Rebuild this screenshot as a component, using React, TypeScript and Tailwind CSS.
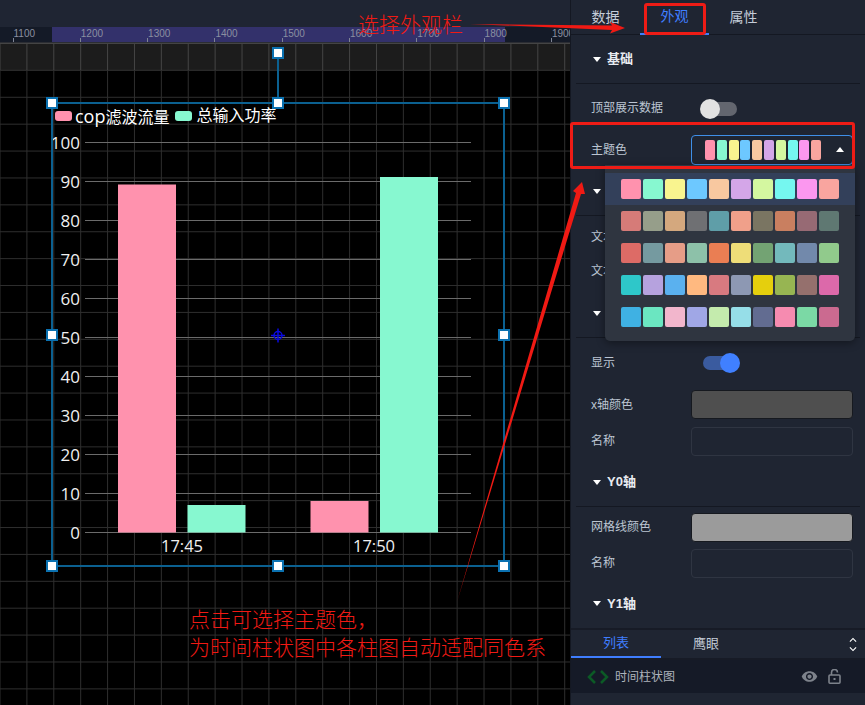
import React from "react";
import { MdVisibility, MdKeyboardArrowUp, MdKeyboardArrowDown } from "react-icons/md";

const palettes = [
  ["#ff92ae", "#87f8d0", "#f9f48f", "#6dc8ff", "#f8c8a0", "#d4a6e8", "#d4f7a0", "#75f7f0", "#fb97ef", "#f9a59f"],
  ["#d67b78", "#969e8a", "#d4a87e", "#6f7073", "#5f9ea8", "#f0a08a", "#7a7562", "#c97f60", "#976a74", "#5f7872"],
  ["#dd6b66", "#759aa0", "#e69d87", "#8dc1a9", "#ea7e53", "#eedd78", "#73a373", "#73b9bc", "#7289ab", "#91ca8c"],
  ["#2ec7c9", "#b6a2de", "#5ab1ef", "#ffb980", "#d87a80", "#8d98b3", "#e5cf0d", "#97b552", "#95706d", "#dc69aa"],
  ["#3fb1e3", "#6be6c1", "#f2b6cc", "#a0a7e6", "#c4ebad", "#96dee8", "#626c91", "#f68bb0", "#7bd9a5", "#cb6a90"],
];

const rulerLabels = ["1100", "1200", "1300", "1400", "1500", "1600", "1700", "1800", "1900"];
const yLabels = [100, 90, 80, 70, 60, 50, 40, 30, 20, 10, 0];

function Caret() {
  return <span className="w-0 h-0 border-x-[4px] border-x-transparent border-t-[5px] border-t-white mr-[6px] shrink-0" />;
}

function Section({ title, h }: { title: string; h: string }) {
  return (
    <div className={`${h} mx-[5px] flex items-center pl-[17px] border-b border-[#141822] text-[13px] font-bold text-[#e8ebf0]`}>
      <Caret />
      {title}
    </div>
  );
}

function Row({ label, h, children }: { label: string; h: string; children?: React.ReactNode }) {
  return (
    <div className={`${h} flex items-center pl-[20px] pr-[12px] text-[12px] text-[#bcc5d2]`}>
      <span className="w-[100px] shrink-0">{label}</span>
      <div className="flex-1 flex items-center">{children}</div>
    </div>
  );
}

function Toggle({ on, className = "" }: { on?: boolean; className?: string }) {
  return (
    <div className={`ml-[12px] relative w-[34px] h-[14px] rounded-full ${on ? "bg-[#3a5b9f]" : "bg-[#63666f]"} ${className}`}>
      <span className={`absolute top-[-3px] w-[20px] h-[20px] rounded-full ${on ? "right-[-3px] bg-[#4080ff]" : "left-[-3px] bg-[#e2e2e2]"}`} />
    </div>
  );
}

function Handle({ className }: { className: string }) {
  return <span className={`absolute w-[12px] h-[12px] bg-white border-2 border-[#0b71b0] ${className}`} />;
}

export default function App() {
  return (
    <div className="relative w-[865px] h-[705px] overflow-hidden flex bg-[#1f2532] [font-family:'Liberation_Sans','Noto_Sans_CJK_SC',sans-serif]">
      {/* left */}
      <div className="w-[570px] h-full flex flex-col shrink-0">
        <div className="h-[27px] bg-[#1f2533]" />
        <div className="h-[16px] bg-[#141a27] relative border-b border-[#2b2d33] overflow-hidden">
          <div className="absolute left-[52px] w-[453px] top-0 bottom-0 bg-[#33316b]" />
          <div className="relative flex h-full pl-[12.5px]">
            {rulerLabels.map((l) => (
              <div key={l} className="w-[67.3px] shrink-0 relative pl-[1px] text-[10px] leading-[14px] text-[#8a8fa0]">
                <span className="absolute left-0 bottom-0 w-px h-[4px] bg-[#7f8494]" />
                {l}
              </div>
            ))}
          </div>
        </div>
        <div className="relative flex-1 bg-black bg-[linear-gradient(to_right,#2e2e2e_1px,transparent_1px),linear-gradient(to_bottom,#2e2e2e_1px,transparent_1px)] bg-[length:26.9px_26.9px] bg-[position:-0.5px_0px]">
          <div className="absolute left-0 right-0 top-0 h-[27px] bg-[#ffffff1c]" />

          {/* chart */}
          <svg className="absolute left-0 top-0" width="570" height="662" viewBox="0 43 570 662" fontFamily="'Open Sans','Liberation Sans',sans-serif">
            {yLabels.map((v, i) => {
              const y = 142.5 + i * 39;
              return (
                <g key={v}>
                  <line x1="85" x2="471" y1={y} y2={y} stroke="#6b6b6b" strokeWidth="1" />
                  <text x="80" y={y + 6} textAnchor="end" fill="#f0f0f0" fontSize="17">{v}</text>
                </g>
              );
            })}
            <rect x="118" y="184.5" width="58" height="348" fill="#ff92ae" />
            <rect x="187.5" y="505" width="58" height="27.5" fill="#87f8d0" />
            <rect x="310.5" y="501" width="58" height="31.5" fill="#ff92ae" />
            <rect x="380" y="177" width="58" height="355.5" fill="#87f8d0" />
            <text x="182" y="552" textAnchor="middle" fill="#f0f0f0" fontSize="16.5">17:45</text>
            <text x="374" y="552" textAnchor="middle" fill="#f0f0f0" fontSize="16.5">17:50</text>
            <line x1="278" x2="278" y1="53" y2="103" stroke="#0b6090" strokeWidth="2" />
            <circle cx="278" cy="335.5" r="4" fill="none" stroke="#0a0ae0" strokeWidth="1.5" />
            <line x1="271" x2="285" y1="335.5" y2="335.5" stroke="#0a0ae0" strokeWidth="1.5" />
            <line x1="278" x2="278" y1="328.5" y2="342.5" stroke="#0a0ae0" strokeWidth="1.5" />
          </svg>

          {/* selection */}
          <div className="absolute left-[51px] top-[59px] w-[454px] h-[465px] border-2 border-[#0b6090]">
            <div className="flex items-center h-[22px] mt-[1px] pl-[2px] text-[16px] text-white leading-none">
              <span className="w-[17px] h-[10px] rounded-[3px] bg-[#ff92ae] mr-[3px]" />
              <span className="mr-[6px]"><span className="text-[18px] [font-family:'Open_Sans']">cop</span>滤波流量</span>
              <span className="w-[17px] h-[10px] rounded-[3px] bg-[#87f8d0] mr-[4px]" />
              <span>总输入功率</span>
            </div>
            <Handle className="left-[-7px] top-[-7px]" />
            <Handle className="left-[219px] top-[-7px]" />
            <Handle className="right-[-7px] top-[-7px]" />
            <Handle className="left-[-7px] top-[225px]" />
            <Handle className="right-[-7px] top-[225px]" />
            <Handle className="left-[-7px] bottom-[-7px]" />
            <Handle className="left-[219px] bottom-[-7px]" />
            <Handle className="right-[-7px] bottom-[-7px]" />
            <Handle className="left-[219px] top-[-57px]" />
          </div>
        </div>
      </div>

      {/* right */}
      <div className="w-[295px] h-full flex flex-col border-l border-[#141822]">
        <div className="h-[35px] shrink-0 flex border-b border-[#141822] text-[14px] text-[#c4ccd8]">
          <div className="w-[69px] flex items-center justify-center">数据</div>
          <div className="w-[69px] flex items-center justify-center text-[#3f7eff] border-b-2 border-[#3f7eff] h-[35px]">外观</div>
          <div className="w-[69px] flex items-center justify-center">属性</div>
        </div>
        <div className="flex-1 min-h-0 overflow-hidden">
          <Section title="基础" h="h-[49px]" />
          <Row label="顶部展示数据" h="h-[47px]"><Toggle className="mt-[3px]" /></Row>
          <Row label="主题色" h="h-[37px]">
            <div className="w-[162px] h-[30px] border border-[#3f8fe8] rounded-[4px] flex items-center pl-[13px]">
              <div className="flex gap-[1.8px]">
                {palettes[0].map((c) => (
                  <span key={c} className="w-[10px] h-[20px] rounded-[2px]" style={{ backgroundColor: c }} />
                ))}
              </div>
              <span className="ml-[15px] w-0 h-0 border-x-[4px] border-x-transparent border-b-[5px] border-b-white" />
            </div>
          </Row>
          <Section title="图例" h="h-[48px]" />
          <Row label="文本颜色" h="h-[41px]" />
          <Row label="文本大小" h="h-[27px]" />
          <Section title="X轴" h="h-[54px] pt-[5px]" />
          <Row label="显示" h="h-[50px]"><Toggle on /></Row>
          <Row label="x轴颜色" h="h-[33px]">
            <div className="w-[162px] h-[29px] rounded-[4px] bg-[#4f4f4f] border border-[#16191f]" />
          </Row>
          <Row label="名称" h="h-[40px]">
            <div className="w-[162px] h-[29px] rounded-[4px] border border-[#2f3542]" />
          </Row>
          <Section title="Y0轴" h="h-[46px] pb-[3px]" />
          <Row label="网格线颜色" h="h-[40px]">
            <div className="w-[162px] h-[29px] rounded-[4px] bg-[#9b9b9b] border border-[#16191f]" />
          </Row>
          <Row label="名称" h="h-[32px]">
            <div className="w-[162px] h-[29px] rounded-[4px] border border-[#2f3542]" />
          </Row>
          <div className="h-[49px] mx-[5px] flex items-center pl-[17px] text-[13px] font-bold text-[#e8ebf0]">
            <Caret />
            Y1轴
          </div>
        </div>
        <div className="h-[32px] shrink-0 flex border-y-2 border-[#171b26] text-[13px]">
          <div className="w-[90px] flex items-center justify-center text-[#3f7eff] border-b-2 border-[#3f7eff]">列表</div>
          <div className="w-[90px] flex items-center justify-center text-[#c4ccd8]">鹰眼</div>
          <div className="ml-auto mr-[5px] flex flex-col items-center justify-center text-white text-[14px] leading-none">
            <MdKeyboardArrowUp className="-mb-[5px]" />
            <MdKeyboardArrowDown />
          </div>
        </div>
        <div className="h-[33px] shrink-0 bg-[#151a27] flex items-center pl-[16px] pr-[24px] text-[12px] text-[#aeb3bb]">
          <svg width="22" height="14" viewBox="0 0 22 14" fill="none" stroke="#0c5a26" strokeWidth="2.5" className="mr-[6px]">
            <path d="M8 1 2 7l6 6M14 1l6 6-6 6" />
          </svg>
          <span>时间柱状图</span>
          <MdVisibility className="ml-auto text-[#7d828b] text-[17px]" />
          <svg width="13" height="15" viewBox="0 0 13 15" fill="none" stroke="#7d828b" strokeWidth="1.6" className="ml-[10px]">
            <path d="M3.5 6V3.5a3 3 0 0 1 6 0" />
            <rect x="1" y="6" width="11" height="8.2" rx="1" />
            <rect x="5.5" y="9" width="2" height="2" fill="#7d828b" stroke="none" />
          </svg>
        </div>
        <div className="h-[12px] shrink-0" />
      </div>

      {/* dropdown */}
      <div className="absolute left-[605px] top-[165px] w-[250px] h-[176px] py-[8px] bg-[#2f3540] rounded-b-[5px] shadow-[0_2px_8px_#0006]">
        {palettes.map((p, i) => (
          <div key={i} className={`h-[32px] flex items-center gap-[2px] pl-[16px] ${i === 0 ? "bg-[#33405a]" : ""}`}>
            {p.map((c) => (
              <span key={c} className="w-[20px] h-[20px] rounded-[2px]" style={{ backgroundColor: c }} />
            ))}
          </div>
        ))}
      </div>

      {/* annotations */}
      <span className="absolute left-[358px] top-[10px] text-[21px] leading-[30px] text-[#f01a14] font-light">选择外观栏</span>
      <div className="absolute left-[189px] top-[606px] text-[21px] leading-[28px] text-[#f01a14] font-light">
        <div>点击可选择主题色，</div>
        <div>为时间柱状图中各柱图自动适配同色系</div>
      </div>
      <div className="absolute left-[644px] top-[3px] w-[62px] h-[32px] border-[3px] border-[#ee1c16] rounded-[3px]" />
      <div className="absolute left-[570px] top-[122px] w-[285px] h-[47px] border-[3px] border-[#ee1c16] rounded-[3px]" />
      <svg className="absolute left-0 top-0 pointer-events-none" width="865" height="705" viewBox="0 0 865 705">
        <polygon points="470,24 612,25.5 610,22 625,28 610,33.5 612,30" fill="#f01a14" />
        <polygon points="457,602 576,193 573,191 582,182 585,194 581,194" fill="#f01a14" />
      </svg>
    </div>
  );
}
